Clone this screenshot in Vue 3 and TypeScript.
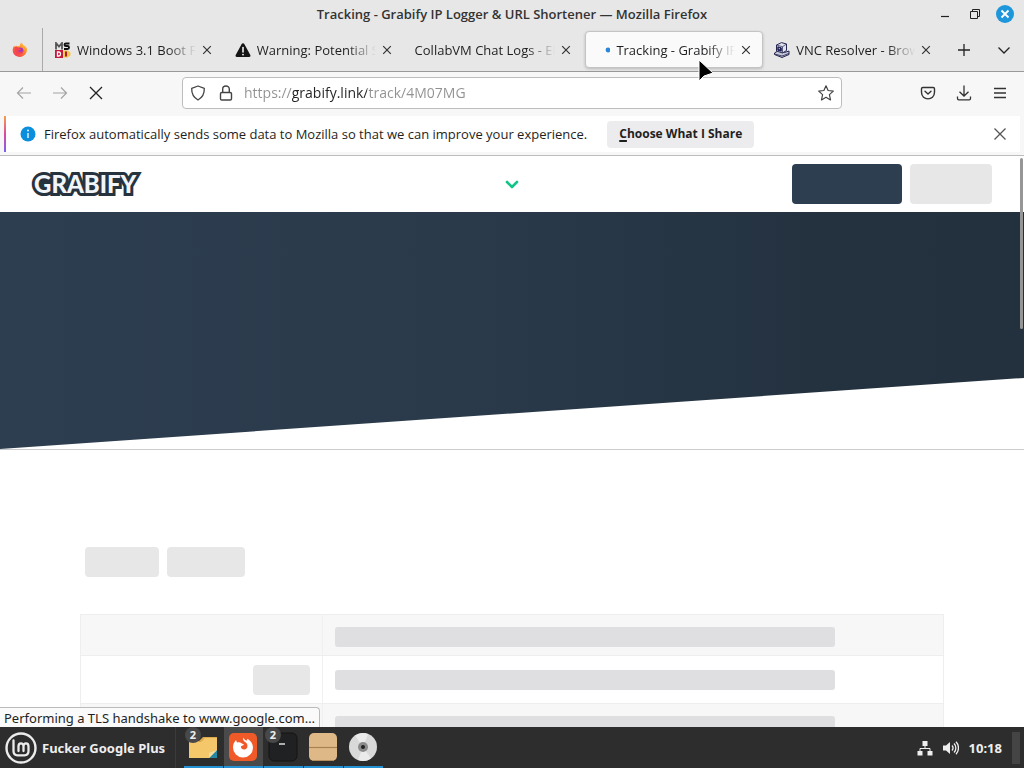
<script setup lang="ts">
import { ref } from 'vue'

interface Tab {
  title: string
  icon: 'msdos' | 'warning' | 'none' | 'loading' | 'vnc'
}

const tabs: Tab[] = [
  { title: 'Windows 3.1 Boot Fl', icon: 'msdos' },
  { title: 'Warning: Potential S', icon: 'warning' },
  { title: 'CollabVM Chat Logs - El', icon: 'none' },
  { title: 'Tracking - Grabify IP', icon: 'loading' },
  { title: 'VNC Resolver - Brow', icon: 'vnc' },
]
const activeTab = ref(3)
const url = ref('https://grabify.link/track/4M07MG')
const rows = [{ action: false }, { action: true }, { action: false }]
</script>

<template>
  <div class="desktop">
    <header class="titlebar">
      <h1>Tracking - Grabify IP Logger &amp; URL Shortener — Mozilla Firefox</h1>
      <div class="window-controls">
        <button aria-label="Minimize">
          <svg width="20" height="20" viewBox="0 0 20 20"><path d="M6 12.500h8" stroke="#222" stroke-width="1.200" /></svg>
        </button>
        <button aria-label="Restore">
          <svg width="20" height="20" viewBox="0 0 20 20" fill="none" stroke="#222"><path d="M5.500 7.500h7v7h-7zM7.500 7.500v-2h7v7h-2" /></svg>
        </button>
        <button aria-label="Close window">
          <svg width="20" height="20" viewBox="0 0 20 20"><circle cx="10" cy="10" r="9" fill="#1e96dc" /><path d="M6.500 6.500l7 7m0-7l-7 7" stroke="#fff" stroke-width="1.800" /></svg>
        </button>
      </div>
    </header>

    <div class="tabstrip">
      <button class="pinned" aria-label="Firefox View">
        <svg width="16" height="16" viewBox="0 0 16 16">
          <defs><linearGradient id="fx" x1="1" y1="0" x2="0.200" y2="1"><stop offset="0" stop-color="#ffe14a" /><stop offset="0.450" stop-color="#ff8a2a" /><stop offset="1" stop-color="#f5325c" /></linearGradient></defs>
          <path d="M9.500.7c1 .8 1.500 1.700 1.800 2.600 1.500.3 3 1.900 3.700 3.500.3 4.500-3 8.200-7.200 8.200C3.700 15 .7 12 .7 8.100c0-1.800.8-3.400 1.600-4.300l.5 1.200 1.400-1.500.7 1c1-.4 2-.4 2.700-.1C7.600 3 8.200 1.600 9.500.7z" fill="url(#fx)" />
          <circle cx="8.200" cy="8.600" r="3.200" fill="#a13ac0" /><path d="M3 5.200c2-.6 3.500.2 4.600 1.300 1 .2 1.500.5 1.400 1-.8.9-2 .7-2.800 1.400 1 1.800 3.800 1.400 5-.5-.1 3-2 4.300-4.200 4.100-2.500-.2-4.300-2.200-4.300-4.800z" fill="#f4444f" />
        </svg>
      </button>
      <div class="tabs" role="tablist">
        <div v-for="(tab, i) in tabs" :key="tab.title" class="tab" :class="{ active: i === activeTab }" role="tab" :aria-selected="i === activeTab" @click="activeTab = i">
          <svg v-if="tab.icon === 'msdos'" class="fav" viewBox="0 0 16 16">
            <path d="M1 7.500V1l3 3.500L7 1v6.500" fill="none" stroke="#555" stroke-width="1.800" />
            <path d="M14.500 1.500H11c-2 0-2 2.500 0 2.500h1.500c2 0 2 3 0 3H9" fill="none" stroke="#111" stroke-width="1.900" />
            <path d="M0 8h8v8H0z" fill="#c4193d" /><path d="M2.500 10H4c2 0 2 4 0 4H2.500z" fill="none" stroke="#fff" stroke-width="1.300" />
            <path d="M8.500 8.500h4l3 2v3l-3 2h-4z" fill="#f1c84d" /><path d="M10 9.500h2v5h-2z" fill="#b01b2e" />
          </svg>
          <svg v-else-if="tab.icon === 'warning'" class="fav" viewBox="0 0 16 16">
            <path d="M8 1.200c.6 0 1 .3 1.300.8l6 11c.5 1-.1 2-1.200 2H1.900c-1.100 0-1.700-1-1.200-2l6-11c.3-.5.700-.8 1.300-.8z" fill="#151515" />
            <path d="M8 5.500v4.500" stroke="#fff" stroke-width="1.500" stroke-linecap="round" /><circle cx="8" cy="12.600" r=".9" fill="#fff" />
          </svg>
          <svg v-else-if="tab.icon === 'loading'" class="fav" viewBox="0 0 16 16"><circle cx="14" cy="8" r="2.400" fill="#2a86d8" /></svg>
          <svg v-else-if="tab.icon === 'vnc'" class="fav" viewBox="0 0 16 16" stroke="#25254f" stroke-linejoin="round">
            <path d="M.5 11l4-2.500 6 2 4.500-1.500v3.500L8 15.500l-7.500-3z" fill="#c6c9d8" />
            <path d="M2.500 3L7.500.6 12.500 2v6.500L8.500 11l-6-2z" fill="#dfe2f0" />
            <path d="M2.500 3l6 1.700v6.300M8.500 4.700l4-2.700" fill="none" stroke-width=".7" />
            <path d="M3.800 4.800l3.500 1v3.400l-3.500-1z" fill="#1c1d58" /><path d="M4.800 6.500l1 .3" stroke="#fff" />
            <path d="M.5 12l7.500 2 7-2.500" fill="none" stroke-width=".8" />
          </svg>
          <span class="tab-title">{{ tab.title }}</span>
          <button class="tab-close" :aria-label="'Close ' + tab.title">
            <svg width="10" height="10" viewBox="0 0 10 10"><path d="M1.200 1.200l7.600 7.600m0-7.600L1.200 8.800" stroke="#333" stroke-width="1.200" /></svg>
          </button>
        </div>
      </div>
      <div class="tab-tools">
        <button aria-label="New tab"><svg width="16" height="16" viewBox="0 0 16 16"><path d="M8 2v12M2 8h12" stroke="#222" stroke-width="1.300" /></svg></button>
        <button aria-label="List all tabs"><svg width="16" height="16" viewBox="0 0 16 16"><path d="M2.500 5.500L8 11l5.500-5.500" fill="none" stroke="#222" stroke-width="1.300" /></svg></button>
      </div>
    </div>

    <nav class="toolbar">
      <div class="nav-buttons">
        <button aria-label="Back" disabled><svg width="16" height="16" viewBox="0 0 16 16" fill="none" stroke="#a4a4a4" stroke-width="1.200"><path d="M15 8H1.500M7 2.500L1.500 8 7 13.500" /></svg></button>
        <button aria-label="Forward" disabled><svg width="16" height="16" viewBox="0 0 16 16" fill="none" stroke="#a4a4a4" stroke-width="1.200"><path d="M1 8h13.500M9 2.500L14.500 8 9 13.500" /></svg></button>
        <button aria-label="Stop"><svg width="16" height="16" viewBox="0 0 16 16" fill="none" stroke="#222" stroke-width="1.300"><path d="M2 2l12 12M14 2L2 14" /></svg></button>
      </div>
      <div class="urlbar">
        <button aria-label="Tracking protection"><svg width="16" height="16" viewBox="0 0 16 16" fill="none" stroke="#444" stroke-width="1.300"><path d="M8 1l6.300 2.300c.2 5-1.800 9.200-6.300 11.700C3.500 12.500 1.500 8.300 1.700 3.300z" stroke-linejoin="round" /></svg></button>
        <button aria-label="Site information"><svg width="16" height="16" viewBox="0 0 16 16" fill="none" stroke="#444" stroke-width="1.400"><rect x="2.500" y="7.500" width="11" height="7.500" rx="1.300" /><path d="M4.700 7.500V4c0-4 6.600-4 6.600 0v3.500" /></svg></button>
        <input v-model="url" class="url" aria-label="Address" spellcheck="false">
        <button aria-label="Bookmark this page"><svg width="16" height="16" viewBox="0 0 16 16" fill="none" stroke="#444" stroke-width="1.200" stroke-linejoin="round"><path d="M8 .8l2.100 4.700 5.200.6-3.900 3.500 1.100 5.300L8 12.300l-4.500 2.600 1.100-5.300L.7 6.100l5.200-.6z" /></svg></button>
      </div>
      <div class="toolbar-right">
        <button aria-label="Save to Pocket"><svg width="16" height="16" viewBox="0 0 16 16" fill="none" stroke="#333" stroke-width="1.400" stroke-linecap="round" stroke-linejoin="round"><path d="M2.800 2.500h10.400c.8 0 1.300.5 1.300 1.300v3.500c0 8.700-13 8.700-13 0V3.800c0-.8.500-1.300 1.300-1.300z" /><path d="M5 6.200L8 9l3-2.800" /></svg></button>
        <button aria-label="Downloads"><svg width="16" height="16" viewBox="0 0 16 16" fill="none" stroke="#333" stroke-width="1.300"><path d="M8 .5v10.500M3.500 6.700L8 11l4.500-4.300M1.500 11.500v2c0 .9.500 1.300 1.300 1.300h10.400c.8 0 1.300-.4 1.300-1.300v-2" /></svg></button>
        <button aria-label="Application menu"><svg width="16" height="16" viewBox="0 0 16 16" stroke="#333" stroke-width="1.300"><path d="M2 3.500h12M2 8h12M2 12.500h12" /></svg></button>
      </div>
    </nav>

    <div class="notice" role="status">
      <svg width="16" height="16" viewBox="0 0 16 16"><circle cx="8" cy="8" r="7.500" fill="#0b8fdc" /><path d="M8 7v5" stroke="#fff" stroke-width="1.300" /><circle cx="8" cy="4.500" r=".9" fill="#fff" /></svg>
      <p>Firefox automatically sends some data to Mozilla so that we can improve your experience.</p>
      <button class="choose"><u>C</u>hoose What I Share</button>
      <button class="dismiss" aria-label="Dismiss"><svg width="16" height="16" viewBox="0 0 16 16"><path d="M2.500 2.500l11 11m0-11l-11 11" stroke="#555" stroke-width="1.300" /></svg></button>
    </div>

    <main class="page">
      <div class="site-header">
        <a class="logo" href="#">GRABIFY</a>
        <button class="expand" aria-label="Expand menu"><svg width="14" height="10" viewBox="0 0 14 10"><path d="M2 3l5 5 5-5" fill="none" stroke="#12c48b" stroke-width="2.600" stroke-linecap="round" stroke-linejoin="round" /></svg></button>
        <div class="account">
          <button class="block primary" aria-label="Register"></button>
          <button class="block login" aria-label="Log in"></button>
        </div>
      </div>
      <div class="hero-wrap"><div class="hero"></div></div>
      <section class="content">
        <div class="actions">
          <button class="block first" aria-label="First action"></button>
          <button class="block second" aria-label="Second action"></button>
        </div>
        <table>
          <colgroup><col class="c1"><col class="c2"><col></colgroup>
          <tbody>
            <tr v-for="(row, i) in rows" :key="i">
              <td class="label"><button v-if="row.action" class="block small" aria-label="Copy"></button></td>
              <td><div class="bar"></div></td>
              <td></td>
            </tr>
          </tbody>
        </table>
      </section>
      <div class="scroll-thumb"></div>
      <div class="status">Performing a TLS handshake to www.google.com…</div>
    </main>

    <footer class="panel">
      <button class="start">
        <svg width="32" height="32" viewBox="0 0 32 32" fill="none" stroke="#ececec"><circle cx="16" cy="16" r="14.500" stroke-width="2.400" /><path d="M8.500 8.500v10.500c0 2.500 1.500 4.300 4 4.300h7c2.500 0 4-1.800 4-4.300v-4.500c0-4-5-4-5-.3V19m0-4.800c0-3.700-5-3.700-5 .3V19" stroke-width="2.300" stroke-linecap="round" /></svg>
        <span>Fucker Google Plus</span>
      </button>
      <div class="tasks">
        <button class="task" aria-label="Files, 2 windows">
          <svg width="30" height="30" viewBox="0 0 30 30"><path d="M1 9h10l4-4h14v21H1z" fill="#dba84c" /><path d="M1 10h12l4-4h12v20H1z" fill="#f4c76b" /><path d="M29 18v8h-8z" fill="#2589a5" /><path d="M21 26v-5l8-3z" fill="#f7dda0" /></svg>
          <span class="count">2</span>
        </button>
        <button class="task focused" aria-label="Firefox">
          <svg width="30" height="30" viewBox="0 0 30 30"><rect x="1" y="1" width="28" height="28" rx="5" fill="#f05a28" /><path d="M15 5.500c1 1.500 1.600 2.200 3.500 3.200l1-2c3.300 2.300 5.500 5 5.500 9A10 10 0 0 1 5 15.500c0-3.500 1.500-5.800 3-7.500l1 2.500c1.700-.5 3.400-.3 4.500.8L16 12.500c-.8 1.200-2 1.200-3 1.700-.8 3.300 4.500 4.600 6.200 1.200.8-2-.2-4.400-2-5.400-1.700-1-2.500-2.700-2.200-4.500z" fill="#fff" /></svg>
        </button>
        <button class="task" aria-label="Terminal, 2 windows">
          <svg width="30" height="30" viewBox="0 0 30 30"><rect x="1" y="1" width="28" height="28" rx="5" fill="#202122" stroke="#151515" /><path d="M11 12h6" stroke="#ddd" stroke-width="1.500" /></svg>
          <span class="count">2</span>
        </button>
        <button class="task" aria-label="Package manager">
          <svg width="30" height="30" viewBox="0 0 30 30"><rect x="1" y="1" width="28" height="28" rx="5" fill="#deb887" /><path d="M1 15.500h28" stroke="#a9804f" stroke-width="1.200" /><path d="M4 28.500h22" stroke="#b58d5c" /></svg>
        </button>
        <button class="task" aria-label="Disc">
          <svg width="30" height="30" viewBox="0 0 30 30"><circle cx="15" cy="15" r="14" fill="#d9d9d9" /><path d="M15 15L7 3.500A14 14 0 0 1 20 2zM15 15l8 11.500A14 14 0 0 1 10 28z" fill="#ebebeb" /><circle cx="15" cy="15" r="5" fill="#8b8b8b" /><circle cx="15" cy="15" r="2" fill="#222" /></svg>
        </button>
      </div>
      <div class="tray">
        <button aria-label="Network"><svg width="16" height="16" viewBox="0 0 16 16" fill="#eee"><path d="M5.500 1h5v5h-5zM.5 11h5v4.500h-5zM10.500 11h5v4.500h-5z" /><path d="M8 6v2.500M3 11V8.500h10V11" fill="none" stroke="#eee" /></svg></button>
        <button aria-label="Volume"><svg width="16" height="16" viewBox="0 0 16 16"><path d="M0 5.500h3L7 2v12l-4-3.500H0z" fill="#eee" /><path d="M9 5.500c1.300 1.500 1.300 3.500 0 5M11 3.500c2.500 2.500 2.500 6.500 0 9M13 1.800c3.300 3.500 3.300 8.900 0 12.400" fill="none" stroke="#eee" stroke-width="1.300" /></svg></button>
        <time>10:18</time>
        <button class="show-desktop" aria-label="Show desktop"></button>
      </div>
    </footer>

    <svg class="pointer" width="18" height="26" viewBox="0 0 18 26"><path d="M2 2v21l5-5 9-3z" fill="#000" stroke="#fff" stroke-width="1" stroke-linejoin="round" /></svg>
  </div>
</template>

<style>
html, body { margin: 0; overflow: hidden; }
</style>

<style scoped>
* { box-sizing: border-box; }
.desktop {
  position: relative;
  display: flex;
  flex-direction: column;
  height: 100vh;
  overflow: hidden;
  background: #e7e7e7;
  color: #1f1f22;
  font: 13px/20px "Open Sans", "Noto Sans", sans-serif;
}
button { display: flex; align-items: center; justify-content: center; padding: 0; border: 0; background: none; font: inherit; color: inherit; flex: none; }
svg { display: block; flex: none; }
.titlebar { display: grid; grid-template-columns: 104px 1fr 104px; align-items: center; height: 28px; flex: none; }
h1 { grid-column: 2; margin: 0; text-align: center; font-size: 13px; line-height: 20px; font-weight: 600; color: #333; white-space: nowrap; }
.window-controls { display: flex; justify-content: flex-end; gap: 10px; padding-right: 9px; }
.tabstrip { display: flex; height: 44px; flex: none; border-bottom: 1px solid #999; }
.pinned { width: 43px; border-right: 1px solid #aaa; padding-right: 3px; }
.tabs { display: flex; flex: 1; min-width: 0; padding: 3px 0 3px 2px; }
.tab { display: flex; align-items: center; flex: 1 1 0; min-width: 0; margin: 0 1px; padding: 0 11px 0 8px; gap: 6px; border-radius: 4px; border: 1px solid transparent; }
.tab.active { background: #fafafa; border-color: #c4c4c4; box-shadow: 0 1px 3px #0003; }
.fav { width: 16px; height: 16px; }
.tab-title { flex: 1; min-width: 0; overflow: hidden; white-space: nowrap; -webkit-mask-image: linear-gradient(to left, transparent, #000 28px); mask-image: linear-gradient(to left, transparent, #000 28px); }
.tab-close { width: 10px; height: 20px; }
.tab-tools { display: flex; align-items: center; gap: 24px; width: 80px; padding-left: 12px; flex: none; }
.toolbar { display: grid; grid-template-columns: 182px 1fr 182px; align-items: center; height: 44px; padding-bottom: 3px; flex: none; background: #f7f7f7; }
.nav-buttons { display: flex; gap: 20px; padding-left: 16px; }
.urlbar { display: flex; align-items: center; height: 32px; padding: 0 7px; gap: 12px; border: 1px solid #bdbdbd; border-radius: 4px; background: #fff; }
.url {
  flex: 1; min-width: 0; height: 24px; padding: 0; margin-left: -2px; border: 0; outline: 0;
  font: 14px/24px "Open Sans", "Noto Sans", sans-serif;
  background: linear-gradient(90deg, #919191 48px, #222 48px, #222 123px, #919191 123px);
  -webkit-background-clip: text; background-clip: text; -webkit-text-fill-color: transparent;
}
.toolbar-right { display: flex; justify-content: flex-end; gap: 20px; padding-right: 16px; }
.notice { display: flex; align-items: center; height: 39px; flex: none; padding: 0 12px 0 16px; background: #fff; border-left: 4px solid #f7f7f7; border-right: 4px solid #f7f7f7; border-bottom: 3px solid #f7f7f7; background-image: linear-gradient(#f5a04a, #d94b9b 50%, #7a62f0); background-size: 2px 100%; background-repeat: no-repeat; }
.notice p { margin: 0 20px 0 8px; white-space: nowrap; }
.choose { height: 27px; padding: 0 12px; border-radius: 4px; background: #ececee; font-size: 12px; font-weight: 700; white-space: nowrap; }
.choose u { text-underline-offset: 2px; text-decoration-thickness: 2px; }
.dismiss { margin-left: auto; }
.page { position: relative; flex: 1; min-height: 0; overflow: hidden; border-top: 1px solid #bdbdbd; background: #fff; }
.site-header { display: grid; grid-template-columns: 1fr auto 1fr; align-items: center; height: 56px; padding: 0 32px; }
.logo { justify-self: start; padding-left: 2px; font: 900 24px/30px "Lato", sans-serif; color: #f2f5f9; text-decoration: none; -webkit-text-stroke: 6px #26333f; paint-order: stroke fill; }
.account { display: flex; justify-content: flex-end; gap: 8px; }
.block { border-radius: 4px; background: #e7e7e7; }
.primary { width: 110px; height: 40px; background: #2c3e50; }
.login { width: 82px; height: 40px; }
.hero-wrap { border-bottom: 1px solid #ccc; }
.hero { height: 237px; background: linear-gradient(90deg, #2d3e50, #2a3a4b 45%, #243240 80%, #23303d); clip-path: polygon(0 0, 100% 0, 100% 70%, 0 100%); }
.content { padding: 97px 80px 0; }
.actions { display: flex; gap: 8px; padding-left: 5px; }
.first { width: 74px; height: 30px; }
.second { width: 78px; height: 30px; }
table { width: 100%; margin-top: 37px; table-layout: fixed; border-collapse: collapse; border: 1px solid #eee; }
.c1 { width: 242px; }
.c2 { width: 520px; }
tr { height: 41px; }
tr:nth-child(2) { height: 48px; }
tr:nth-child(odd) { background: #f7f7f7; }
tr:nth-child(odd) td { padding-top: 12px; vertical-align: top; }
td { padding: 0 8px 0 12px; border-bottom: 1px solid #eee; }
td:nth-child(2) { border-left: 1px solid #f0f0f0; }
td.label { padding-right: 12px; }
.small { width: 57px; height: 30px; margin-left: auto; }
.bar { height: 20px; border-radius: 3px; background: #dfdfe2; }
.scroll-thumb { position: absolute; top: 2px; right: 1px; width: 3px; height: 171px; border-radius: 2px; background: #969696; }
.status { position: absolute; left: 0; bottom: 0; height: 20px; padding: 0 4px; border: 1px solid #bbb; border-left: 0; border-bottom: 0; border-radius: 0 4px 0 0; background: #fafafa; font-family: "Noto Sans", sans-serif; font-size: 13px; white-space: nowrap; }
.panel { display: flex; align-items: stretch; height: 41px; flex: none; background: #2d2d2d; color: #eee; font-family: "Noto Sans", sans-serif; font-weight: 700; }
.start { gap: 5px; width: 176px; padding-left: 5px; justify-content: flex-start; border-right: 1px solid #3b3b3b; white-space: nowrap; }
.tasks { display: flex; gap: 1px; padding-left: 8px; }
.task { position: relative; width: 39px; padding-right: 1px; border-bottom: 2px solid #2492d4; }
.focused { background: #4a4a4a; }
.count { position: absolute; top: 0; left: 1px; width: 16px; height: 16px; border-radius: 8px; background: #484848; font-size: 11px; line-height: 16px; }
.tray { display: flex; align-items: center; gap: 10px; margin-left: auto; padding-right: 4px; }
.show-desktop { width: 8px; height: 32px; background: #444; }
.pointer { position: absolute; left: 697px; top: 58px; }
</style>
